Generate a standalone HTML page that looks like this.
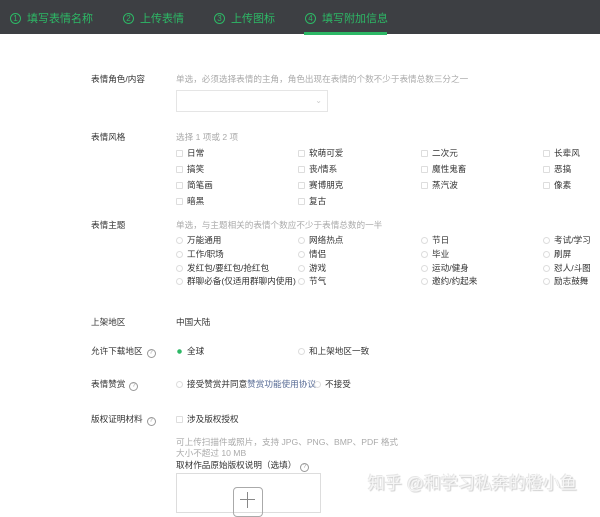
<!DOCTYPE html>
<html><head><meta charset="utf-8"><style>
*{margin:0;padding:0;box-sizing:border-box}
body{width:600px;height:508px;overflow:hidden;background:#fff;font-family:"Liberation Sans","Noto Sans CJK SC",sans-serif;font-size:8.6px;color:#333;position:relative}
.hd{position:absolute;left:0;top:0;width:600px;height:34px;background:#3d3f43}
.st{position:absolute;top:10px;color:#2db866;font-size:11px;white-space:nowrap}
.st b{display:inline-block;width:11px;height:11px;border:1px solid #2db866;border-radius:50%;font-size:8px;line-height:9px;text-align:center;font-weight:normal;margin-right:6px;vertical-align:1px}
.ul{position:absolute;left:304px;top:32px;width:83px;height:3px;background:#2db866}
.a{position:absolute;white-space:nowrap;line-height:10px}
.lb{left:91px;color:#333}
.g{color:#aaa}
.cb,.rd{display:inline-block;width:7px;height:7px;border:1px solid #ddd;margin-right:4px;vertical-align:-1px;border-radius:1px}
.rd{border-radius:50%}
.q{display:inline-block;width:9px;height:9px;border:1px solid #999;border-radius:50%;font-size:6px;line-height:7px;text-align:center;color:#999;margin-left:4px;vertical-align:0}
</style></head><body>
<div class="hd"></div>
<div class="st" style="left:10px"><b>1</b>填写表情名称</div>
<div class="st" style="left:123px"><b>2</b>上传表情</div>
<div class="st" style="left:214px"><b>3</b>上传图标</div>
<div class="st" style="left:305px"><b>4</b>填写附加信息</div>
<div class="ul"></div>

<div class="a lb" style="top:74px">表情角色/内容</div>
<div class="a g" style="left:176px;top:74px">单选，必须选择表情的主角，角色出现在表情的个数不少于表情总数三分之一</div>
<div class="a" style="left:176px;top:90px;width:152px;height:22px;border:1px solid #e5e5e5"><span style="position:absolute;right:5px;top:5px;color:#ccc;font-size:8px">⌄</span></div>

<div class="a lb" style="top:132px">表情风格</div>
<div class="a g" style="left:176px;top:132px">选择 1 项或 2 项</div>
<div class="a" style="left:176px;top:148px"><i class="cb"></i>日常</div>
<div class="a" style="left:298px;top:148px"><i class="cb"></i>软萌可爱</div>
<div class="a" style="left:421px;top:148px"><i class="cb"></i>二次元</div>
<div class="a" style="left:543px;top:148px"><i class="cb"></i>长辈风</div>
<div class="a" style="left:176px;top:164px"><i class="cb"></i>搞笑</div>
<div class="a" style="left:298px;top:164px"><i class="cb"></i>丧/情系</div>
<div class="a" style="left:421px;top:164px"><i class="cb"></i>魔性鬼畜</div>
<div class="a" style="left:543px;top:164px"><i class="cb"></i>恶搞</div>
<div class="a" style="left:176px;top:180px"><i class="cb"></i>简笔画</div>
<div class="a" style="left:298px;top:180px"><i class="cb"></i>赛博朋克</div>
<div class="a" style="left:421px;top:180px"><i class="cb"></i>蒸汽波</div>
<div class="a" style="left:543px;top:180px"><i class="cb"></i>像素</div>
<div class="a" style="left:176px;top:196px"><i class="cb"></i>暗黑</div>
<div class="a" style="left:298px;top:196px"><i class="cb"></i>复古</div>

<div class="a lb" style="top:220px">表情主题</div>
<div class="a g" style="left:176px;top:220px">单选，与主题相关的表情个数应不少于表情总数的一半</div>
<div class="a" style="left:176px;top:235px"><i class="rd"></i>万能通用</div>
<div class="a" style="left:298px;top:235px"><i class="rd"></i>网络热点</div>
<div class="a" style="left:421px;top:235px"><i class="rd"></i>节日</div>
<div class="a" style="left:543px;top:235px"><i class="rd"></i>考试/学习</div>
<div class="a" style="left:176px;top:249px"><i class="rd"></i>工作/职场</div>
<div class="a" style="left:298px;top:249px"><i class="rd"></i>情侣</div>
<div class="a" style="left:421px;top:249px"><i class="rd"></i>毕业</div>
<div class="a" style="left:543px;top:249px"><i class="rd"></i>刷屏</div>
<div class="a" style="left:176px;top:263px"><i class="rd"></i>发红包/要红包/抢红包</div>
<div class="a" style="left:298px;top:263px"><i class="rd"></i>游戏</div>
<div class="a" style="left:421px;top:263px"><i class="rd"></i>运动/健身</div>
<div class="a" style="left:543px;top:263px"><i class="rd"></i>怼人/斗图</div>
<div class="a" style="left:176px;top:276px"><i class="rd"></i>群聊必备(仅适用群聊内使用)</div>
<div class="a" style="left:298px;top:276px"><i class="rd"></i>节气</div>
<div class="a" style="left:421px;top:276px"><i class="rd"></i>邀约/约起来</div>
<div class="a" style="left:543px;top:276px"><i class="rd"></i>励志鼓舞</div>

<div class="a lb" style="top:317px">上架地区</div>
<div class="a" style="left:176px;top:317px">中国大陆</div>

<div class="a lb" style="top:346px">允许下载地区<span class="q">?</span></div>
<div class="a" style="left:176px;top:346px"><i class="rd" style="border:none;background:radial-gradient(circle,#2db866 2px,#fff 2.5px)"></i>全球</div>
<div class="a" style="left:298px;top:346px"><i class="rd"></i>和上架地区一致</div>

<div class="a lb" style="top:379px">表情赞赏<span class="q">?</span></div>
<div class="a" style="left:176px;top:379px"><i class="rd"></i>接受赞赏并同意<span style="color:#576b95">赞赏功能使用协议</span></div>
<div class="a" style="left:314px;top:379px"><i class="rd"></i>不接受</div>

<div class="a lb" style="top:414px">版权证明材料<span class="q">?</span></div>
<div class="a" style="left:176px;top:414px"><i class="cb"></i>涉及版权授权</div>
<div class="a g" style="left:176px;top:437px">可上传扫描件或照片，支持 JPG、PNG、BMP、PDF 格式</div>
<div class="a g" style="left:176px;top:448px">大小不超过 10 MB</div>
<div class="a" style="left:176px;top:460px">取材作品原始版权说明（选填）<span class="q">?</span></div>
<div class="a" style="left:176px;top:473px;width:145px;height:40px;border:1px solid #ddd"></div>
<div class="a" style="left:233px;top:487px;width:30px;height:30px;border:1px solid #aaa;border-radius:4px"></div>
<div class="a" style="left:247px;top:492px;width:1px;height:16px;background:#888"></div>
<div class="a" style="left:240px;top:499px;width:15px;height:1px;background:#888"></div>

<div class="a" style="left:368px;top:474px;font-size:17px;line-height:20px;color:#f6f6f6;text-shadow:1px 1px 1px #ccc,-1px -1px 0 #e6e6e6">知乎 @和学习私奔的橙小鱼</div>
</body></html>
